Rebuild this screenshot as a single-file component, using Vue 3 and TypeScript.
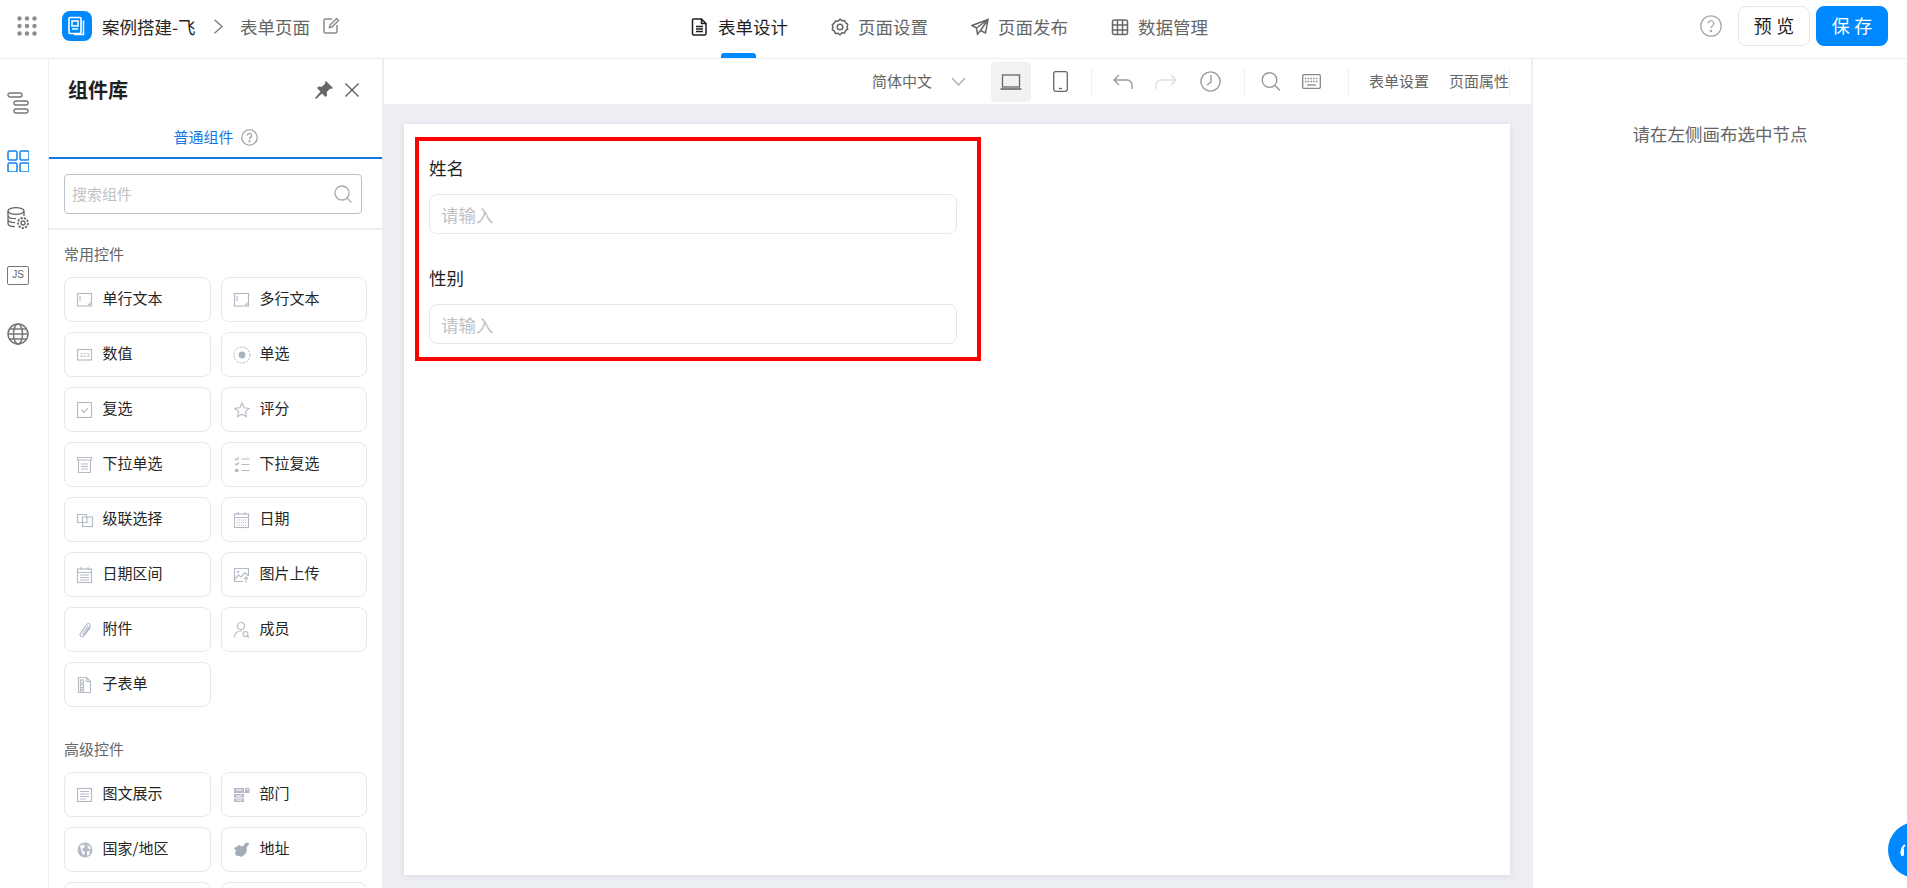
<script setup lang="ts">
interface Widget { name: string; icon: string }

const S = 'fill="none" stroke="#b4bbc7" stroke-width="1.150"'
const F = '#b4bbc7'
const icons: Record<string, string> = {
  text: `<g ${S}><rect x="0.5" y="1.500" width="14" height="12.500"/><path d="M3 4v5"/></g><path d="M13.500 10v3h-3z" fill="${F}"/>`,
  num: `<rect x="0.5" y="2.500" width="14" height="10.500" ${S}/><text x="7.500" y="9.800" text-anchor="middle" font-size="6" fill="${F}" font-family="Liberation Sans">123</text>`,
  radio: `<circle cx="8" cy="8" r="8" fill="none" stroke="#aab2c0" stroke-dasharray="2 1.200"/><circle cx="8" cy="8" r="3.400" fill="#aab2c0"/>`,
  check: `<g ${S}><rect x="0.5" y="0.500" width="14" height="15"/><path d="M4.500 8l2.400 2.400L11 6"/></g>`,
  star: `<path d="M8 1l2.100 4.700 5 .6-3.700 3.400 1 5L8 12.200l-4.400 2.500 1-5L.9 6.300l5-.6z" ${S}/>`,
  select: `<g ${S}><path d="M0.500 0.500h14v2.500h-14z"/><path d="M1.500 3v12.500h12V3M4 7h7M4 9.500h7M4 12h7"/></g>`,
  multi: `<g ${S}><path d="M1 1.500l1.500 1.500L5 .5M1 6.500l1.500 1.500L5 5.500M7.500 2h8M7.500 7.500h8M7.500 13.500h8"/></g><rect x="1" y="12" width="3.500" height="3" fill="${F}"/>`,
  cascade: `<g ${S}><path d="M6 10.500H.5v-8h9v2"/><rect x="5.500" y="5" width="10" height="9.500"/><path d="M5.500 5v5.500h4.500V5"/></g>`,
  date: `<g ${S}><rect x="0.500" y="2" width="14" height="13.500"/><path d="M0.500 5.500h14M4 0v3M11 0v3"/></g><path d="M3 8h9M3 10.500h9M3 13h9" stroke="${F}" stroke-dasharray="1 1"/>`,
  range: `<g ${S}><rect x="0.500" y="2" width="14" height="13.500"/><path d="M0.500 5.500h14M4 0v3M11 0v3M3 8h9M3 10.500h9M3 13h9"/></g>`,
  image: `<g ${S}><path d="M9 14.500H.5v-13h14V9"/><path d="M1 12l3.500-4 2.500 2 4-4.500 3 3M12 15.500V10M10.200 11.800L12 10l1.800 1.800"/></g><circle cx="4" cy="4.800" r="1.200" fill="${F}"/>`,
  clip: `<path d="M13.500 5.500L7 13.800c-1.700 2-5 .2-3.600-2.500L10 2.300c1.300-1.700 4-.3 3 1.800L7.500 12c-.8 1-2 .3-1.500-.8L11 4.500" ${S}/>`,
  member: `<g ${S}><circle cx="7" cy="4" r="3.500"/><path d="M.5 15.500c0-4 2.600-6.500 7-6.500"/><circle cx="11.500" cy="12" r="2.500"/><path d="M13.300 13.800l1.700 1.700"/></g>`,
  sub: `<g ${S}><path d="M1.500 .5h8l4 4v11h-12zM9.500 .5v4h4"/><rect x="3.500" y="3" width="3" height="3"/><rect x="3.500" y="7.500" width="3" height="3"/><rect x="3.500" y="12" width="3" height="2"/></g>`,
  rich: `<g ${S}><rect x="0.500" y="1.500" width="14" height="13"/><path d="M3 4.500h9M3 7h9M3 9.500h9M3 12h6"/></g>`,
  dept: `<path d="M0 1h10v5H0zM11 1h4.500v4H11zM0 7h10v3.500H0zM0 11.500h10V15H0z" fill="${F}"/><path d="M2 3h6M2 9h6M2 13h6M12.500 2.500h2" stroke="#fff"/><path d="M10.500 5.500h5" stroke="${F}"/>`,
  globe: `<circle cx="8" cy="8" r="7.500" fill="${F}"/><path d="M3 4l3-1.500 2 1-1 2.500-2 .5 1 2.500 2 1-1 3-2-1.500-1-4zM10 3l3 1.500 1 3-2.500-.5zM10 9.500l3-.5-1 4-2 .5z" fill="#fff"/>`,
  china: `<path d="M0 6l3-1.500 2-1.500 3 1.500 1.500-1 2-2.500 3-.5.500 2-1.500 1.500-1 2 .5 2-1 3-2.500 2.500-2.500 1.500-2-1-3-.5-1-2.500L2 9z" fill="#a3adba"/>`
}

const basic: Widget[] = [
  { name: '单行文本', icon: 'text' }, { name: '多行文本', icon: 'text' },
  { name: '数值', icon: 'num' }, { name: '单选', icon: 'radio' },
  { name: '复选', icon: 'check' }, { name: '评分', icon: 'star' },
  { name: '下拉单选', icon: 'select' }, { name: '下拉复选', icon: 'multi' },
  { name: '级联选择', icon: 'cascade' }, { name: '日期', icon: 'date' },
  { name: '日期区间', icon: 'range' }, { name: '图片上传', icon: 'image' },
  { name: '附件', icon: 'clip' }, { name: '成员', icon: 'member' },
  { name: '子表单', icon: 'sub' }
]
const advanced: Widget[] = [
  { name: '图文展示', icon: 'rich' }, { name: '部门', icon: 'dept' },
  { name: '国家/地区', icon: 'globe' }, { name: '地址', icon: 'china' },
  { name: '', icon: '' }, { name: '', icon: '' }
]
const sections = [
  { title: '常用控件', items: basic },
  { title: '高级控件', items: advanced }
]
const fields = ['姓名', '性别']
</script>

<template>
  <div class="page">
    <header class="topbar">
      <div class="crumbs">
        <svg class="apps" width="20" height="20" viewBox="0 0 20 20" fill="#8a8d92">
          <circle v-for="p in 9" :key="p" :cx="2.5 + ((p - 1) % 3) * 7.500" :cy="2.5 + Math.floor((p - 1) / 3) * 7.500" r="2.200" />
        </svg>
        <span class="logo">
          <svg width="18" height="20" viewBox="0 0 18 20" fill="none" stroke="#fff">
            <rect x="1" y="1.500" width="12" height="16" rx="1" stroke-width="1.600" />
            <rect x="4" y="5" width="6" height="5" stroke-width="1.500" />
            <path d="M4 13h6" stroke-width="1.500" />
            <path d="M15.500 4.500V18.500H6" stroke-width="1.500" />
          </svg>
        </span>
        <span class="app-name">案例搭建-飞</span>
        <svg class="crumb-arrow" width="11" height="15" viewBox="0 0 11 15" fill="none" stroke="#777" stroke-width="1.300"><path d="M1.500 .8L9 7.500l-7.500 6.700" /></svg>
        <span class="page-name">表单页面</span>
        <svg class="edit" width="17" height="17" viewBox="0 0 17 17" fill="none" stroke="#8a8a8a" stroke-width="1.500">
          <path d="M9 2H2.500a1.500 1.500 0 0 0-1.500 1.500v11A1.500 1.500 0 0 0 2.500 16h10a1.500 1.500 0 0 0 1.500-1.500V8" />
          <path d="M6.500 10.500L7 8l6.500-6.500 2 2L9 10z" />
        </svg>
      </div>

      <nav class="nav">
        <a class="nav-item active">
          <svg width="18" height="18" viewBox="0 0 18 18" fill="none" stroke="#1f1f1f" stroke-width="1.500">
            <path d="M2.500 1h8l4.500 4.500V15.500a1.500 1.500 0 0 1-1.500 1.500h-11A1.500 1.500 0 0 1 1.500 15.500V2A1 1 0 0 1 2.500 1zM10.500 1v4.500H15M5 8.500h7M5 11h7M5 13.500h7" />
          </svg>
          表单设计
        </a>
        <a class="nav-item">
          <svg width="18" height="18" viewBox="0 0 18 18" fill="none" stroke="#666" stroke-width="1.500">
            <path d="M9 1.200l2 1.500 2.500-.2 1.200 2.200 2 1.500-.6 2.700.6 2.300-2 1.400-1.200 2.300-2.500-.2L9 16.800l-2-1.600-2.500.2-1.200-2.300-2-1.400.6-2.300-.6-2.700 2-1.500 1.200-2.200 2.500.2z" />
            <circle cx="9" cy="9" r="2.800" />
          </svg>
          页面设置
        </a>
        <a class="nav-item">
          <svg width="18" height="18" viewBox="0 0 18 18" fill="none" stroke="#666" stroke-width="1.500">
            <path d="M17 1.500L1 7.500l4.500 2.500 1 6 3-3.500 5 2.500zM17 1.500L5.500 10M17 1.500L9.500 12.500" />
          </svg>
          页面发布
        </a>
        <a class="nav-item">
          <svg width="18" height="18" viewBox="0 0 18 18" fill="none" stroke="#666" stroke-width="1.500">
            <rect x="1.500" y="2" width="15" height="14.500" rx="2" />
            <path d="M6.500 2v14.500M11.500 2v14.500M1.500 7h15M1.500 12h15" />
          </svg>
          数据管理
        </a>
      </nav>

      <div class="actions">
        <svg width="22" height="22" viewBox="0 0 22 22" fill="none" stroke="#aaa" stroke-width="1.300">
          <circle cx="11" cy="11" r="10.200" />
          <path d="M8.200 8.500a2.800 2.800 0 1 1 4.400 2.300c-1 .7-1.600 1.200-1.600 2.500" />
          <circle cx="11" cy="16" r=".6" fill="#aaa" />
        </svg>
        <button class="btn">预览</button>
        <button class="btn primary">保存</button>
      </div>
    </header>

    <div class="body">
      <aside class="rail">
        <svg width="22" height="22" viewBox="0 0 22 22" fill="none" stroke="#777" stroke-width="1.400">
          <rect x="1" y="1" width="14" height="4" rx="2" />
          <rect x="7" y="9" width="14" height="4" rx="2" />
          <rect x="7" y="17" width="14" height="4" rx="2" />
        </svg>
        <svg width="22" height="22" viewBox="0 0 22 22" fill="none" stroke="#0e83ec" stroke-width="1.500">
          <rect x="1" y="1" width="9" height="9" rx="1.500" />
          <rect x="13" y="1" width="9" height="9" rx="1.500" />
          <rect x="1" y="13" width="9" height="9" rx="1.500" />
          <rect x="13" y="13" width="9" height="9" rx="1.500" />
        </svg>
        <svg width="22" height="22" viewBox="0 0 22 22" fill="none" stroke="#666" stroke-width="1.300">
          <ellipse cx="9" cy="4" rx="8" ry="3.300" />
          <path d="M1 4v12.500c0 1.800 3 3 7 3.200M17 4v5M1 8.500c0 1.800 3.500 3.200 8 3.200M1 12.500c0 1.800 3 3 7 3.200" />
          <circle cx="16" cy="16" r="2" />
          <circle cx="16" cy="16" r="5" stroke-dasharray="2.200 1.200" stroke-width="1.800" />
        </svg>
        <span class="js">JS</span>
        <svg width="22" height="22" viewBox="0 0 22 22" fill="none" stroke="#777" stroke-width="1.500">
          <circle cx="11" cy="11" r="10" />
          <ellipse cx="11" cy="11" rx="4.500" ry="10" />
          <path d="M1 11h20M2.500 6h17M2.500 16h17" />
        </svg>
      </aside>

      <section class="panel">
        <div class="panel-head">
          <h2>组件库</h2>
          <svg class="pin" width="20" height="20" viewBox="0 0 20 20" fill="#666">
            <path d="M12 1l7 7-1.500 1-1.200-.4-3.600 3.400.3 3.500-1.500 1.500-3.500-3.500L2 19l-1-1 5.500-6.500L3 8l1.500-1.500 3.500.3 3.400-3.600L11 2z" />
          </svg>
          <svg class="close" width="14" height="14" viewBox="0 0 14 14" stroke="#555" stroke-width="1.200"><path d="M.5 .5l13 13M13.500 .5l-13 13" /></svg>
        </div>
        <div class="tab">
          普通组件
          <svg width="17" height="17" viewBox="0 0 22 22" fill="none" stroke="#999" stroke-width="1.500">
            <circle cx="11" cy="11" r="10" />
            <path d="M8.200 8.500a2.800 2.800 0 1 1 4.400 2.300c-1 .7-1.600 1.200-1.600 2.500" />
            <circle cx="11" cy="16" r=".6" fill="#999" />
          </svg>
        </div>
        <div class="search-wrap">
          <div class="search">
            <span>搜索组件</span>
            <svg width="18" height="18" viewBox="0 0 18 18" fill="none" stroke="#a5a9b0" stroke-width="1.300">
              <circle cx="8" cy="8" r="7" />
              <path d="M13 13l4.500 4.500" />
            </svg>
          </div>
        </div>
        <div v-for="sec in sections" :key="sec.title" class="group">
          <h3>{{ sec.title }}</h3>
          <div class="cards">
            <div v-for="(w, i) in sec.items" :key="i" class="card">
              <template v-if="w.name">
                <svg class="card-icon" width="16" height="16" viewBox="0 0 16 16" v-html="icons[w.icon]" />
                <span>{{ w.name }}</span>
              </template>
            </div>
          </div>
        </div>
      </section>

      <main class="main">
        <div class="toolbar">
          <span class="tool-text">简体中文</span>
          <svg class="t-chev" width="15" height="9" viewBox="0 0 15 9" fill="none" stroke="#aaa" stroke-width="1.200"><path d="M1 1l6.500 7L14 1" /></svg>
          <span class="device">
            <svg width="22" height="16" viewBox="0 0 22 16" fill="none" stroke="#666" stroke-width="1.300">
              <rect x="2.500" y="1" width="17" height="12" />
              <path d="M.5 15h21" stroke-width="1.600" />
            </svg>
          </span>
          <svg class="t-phone" width="15" height="21" viewBox="0 0 15 21" fill="none" stroke="#666" stroke-width="1.300">
            <rect x=".7" y=".7" width="13.600" height="19.600" rx="2" />
            <path d="M6 17.500h3" />
          </svg>
          <i class="sep s1"></i>
          <svg class="t-undo" width="20" height="16" viewBox="0 0 20 16" fill="none" stroke="#999" stroke-width="1.300">
            <path d="M6 1L1 6l5 5M1 6h13a5 5 0 0 1 5 5v4" />
          </svg>
          <svg class="t-redo" width="22" height="16" viewBox="0 0 22 16" fill="none" stroke="#ddd" stroke-width="1.300">
            <path d="M16 1l5 5-5 5M21 6H6a5 5 0 0 0-5 5v4" />
          </svg>
          <svg class="t-clock" width="21" height="21" viewBox="0 0 21 21" fill="none" stroke="#999" stroke-width="1.400">
            <circle cx="10.500" cy="10.500" r="9.600" />
            <path d="M11 4v7l-4 3" />
          </svg>
          <i class="sep s2"></i>
          <svg class="t-search" width="21" height="19" viewBox="0 0 21 19" fill="none" stroke="#999" stroke-width="1.400">
            <circle cx="8.500" cy="8" r="7.300" />
            <path d="M14 13.500l5 5" />
          </svg>
          <svg class="t-keys" width="19" height="15" viewBox="0 0 19 15" fill="none" stroke="#888" stroke-width="1.300">
            <rect x=".7" y=".7" width="17.600" height="13.600" rx="1" />
            <path d="M3 4.500h13M3 7.500h13" stroke-dasharray="1.500 1.200" />
            <path d="M5 11h9" />
          </svg>
          <i class="sep s3"></i>
          <span class="tool-text t-form">表单设置</span>
          <span class="tool-text t-page">页面属性</span>
          <i class="sep s4"></i>
        </div>

        <div class="canvas">
          <div class="sheet">
            <div class="form">
              <div v-for="f in fields" :key="f" class="field">
                <label>{{ f }}</label>
                <div class="input">请输入</div>
              </div>
            </div>
          </div>
        </div>
      </main>

      <aside class="props">请在左侧画布选中节点</aside>
    </div>

    <div class="fab">
      <svg width="28" height="28" viewBox="0 0 28 28" fill="none" stroke="#fff" stroke-width="2">
        <path d="M13 9c-3 2-4 6-3 11" />
        <path d="M12 12l-4 5 4 3" fill="#fff" stroke="none" />
      </svg>
    </div>
  </div>
</template>

<style>
html, body { margin: 0; padding: 0; overflow: hidden; background: #fff; }
</style>

<style scoped>
.page {
  position: relative;
  display: flex;
  flex-direction: column;
  height: 100vh;
  overflow: hidden;
  font-family: "Noto Sans CJK SC", "Noto Sans", sans-serif;
  color: #1f1f1f;
}
.topbar {
  position: relative;
  flex: 0 0 59px;
  box-sizing: border-box;
  display: grid;
  grid-template-columns: 691px auto 1fr;
  align-items: start;
  border-bottom: 1px solid #ecedef;
  font-size: 17.5px;
}
.crumbs { display: flex; align-items: center; padding-left: 17px; height: 52px; }
.logo {
  width: 30px; height: 30px; margin-left: 25px; border-radius: 8px; background: #0089ff;
  display: flex; align-items: center; justify-content: center;
}
.app-name { margin-left: 10px; white-space: nowrap; width: 100px; color: #262626; }
.crumb-arrow { margin-left: 11px; }
.page-name { margin-left: 16px; color: #666; white-space: nowrap; }
.edit { margin-left: 13px; margin-top: -1px; }
.nav { display: flex; gap: 43px; height: 58px; }
.nav-item {
  position: relative; display: flex; align-items: center; gap: 9px; height: 58px; box-sizing: border-box; padding-bottom: 6px;
  white-space: nowrap; color: #666;
}
.nav-item svg { margin-top: 2px; }
.nav-item.active { color: #1f1f1f; }
.nav-item.active::after {
  content: ""; position: absolute; left: 30px; bottom: 0; width: 35px; height: 5px;
  background: #0089ff; border-radius: 3px 3px 0 0;
}
.actions { display: flex; align-items: center; justify-content: flex-end; padding-right: 19px; height: 52px; }
.btn {
  box-sizing: border-box; width: 72px; height: 40px; margin-left: 6px; border: 1px solid #e5e6e8; border-radius: 8px;
  background: #fff; color: #1f1f1f; font: inherit; font-size: 18px; letter-spacing: 4.500px; padding: 0 0 3px 4.500px;
}
.actions svg + .btn { margin-left: 16px; }
.btn.primary { background: #0089ff; border-color: #0089ff; color: #fff; }

.body { flex: 1; display: flex; min-height: 0; }
.rail {
  flex: 0 0 49px; box-sizing: border-box; border-right: 1px solid #ecedef;
  display: flex; flex-direction: column; gap: 35.700px; padding: 33px 0 0 7px;
}
.js {
  box-sizing: border-box; width: 22px; height: 19px; margin-top: 1px; margin-bottom: 2px; border: 1.500px solid #777; border-radius: 2px;
  font: 10px/16px "Liberation Sans", sans-serif; color: #666; text-align: center;
}
.panel { flex: 0 0 333px; overflow: hidden; }
.panel-head { display: flex; align-items: center; height: 62px; padding-left: 19px; padding-top: 0; }
.panel-head h2 { margin: 0; font-size: 20px; font-weight: 700; line-height: 62px; color: #1f1f1f; flex: 1; }
.pin { margin-right: 11px; }
.close { margin-right: 23px; }
.tab {
  box-sizing: border-box; height: 38px; border-bottom: 2px solid #1178e6; color: #1178e6; font-size: 15px;
  display: flex; align-items: flex-start; justify-content: center; gap: 7px; line-height: 32px;
  padding-top: 0;
}
.tab svg { margin-top: 8px; }
.search-wrap { box-sizing: border-box; height: 71px; padding: 15px 20px 0 15px; border-bottom: 2px solid #eceef0; }
.search {
  box-sizing: border-box; height: 40px; border: 1px solid #bcc2cc; border-radius: 4px;
  display: flex; align-items: center; justify-content: space-between; padding: 0 9px 0 7px;
  font-size: 15px; color: #bfc1c5;
}
.search span { padding-bottom: 2px; }
.group { padding: 13px 15px 0; }
.group + .group { padding-top: 31px; }
.group h3 { margin: 0 0 12px; font-size: 15px; font-weight: 400; line-height: 22px; color: #666; }
.cards { display: grid; grid-template-columns: 147px 146px; gap: 10px; }
.card {
  box-sizing: border-box; height: 45px; border: 1.500px solid #e7e8ea; border-radius: 8px;
  display: flex; align-items: center; gap: 10px; padding-left: 11.500px; font-size: 15px; color: #262626; white-space: nowrap;
}
.card span { padding-bottom: 5px; }
.card-icon { flex: none; overflow: visible; }

.main { flex: 0 0 1149px; min-width: 0; box-sizing: border-box; border-left: 2px solid #eceef2; display: flex; flex-direction: column; }
.toolbar { flex: 0 0 45px; display: flex; align-items: center; font-size: 15px; color: #666; padding-left: 488px; box-sizing: border-box; }
.tool-text { white-space: nowrap; padding-bottom: 2px; }
.t-chev { margin-left: 19px; }
.device {
  width: 40px; height: 40px; margin-left: 25px; margin-top: 1px; background: #f1f2f3; border-radius: 4px;
  display: flex; align-items: center; justify-content: center; flex: none;
}
.t-phone { margin-left: 22px; }
.sep { flex: none; width: 1px; height: 25px; background: #eceef0; }
.s1 { margin-left: 23px; }
.t-undo { margin-left: 21px; }
.t-redo { margin-left: 22px; }
.t-clock { margin-left: 23px; }
.s2 { margin-left: 23px; }
.t-search { margin-left: 16px; }
.t-keys { margin-left: 20px; }
.s3 { margin-left: 27px; }
.t-form { margin-left: 20px; }
.t-page { margin-left: 20px; }
.canvas { flex: 1; min-height: 0; background: #eceef2; padding: 20px 21px 13px 20px; box-sizing: border-box; }
.sheet { height: 100%; background: #fff; box-shadow: 0 1px 6px rgba(90, 100, 130, 0.14); overflow: hidden; padding: 13px 0 0 11px; box-sizing: border-box; }
.form { box-sizing: border-box; width: 566px; height: 224px; border: 4px solid #f00; padding: 16px 20px 0 10px; }
.field + .field { margin-top: 33px; }
.field label { display: block; height: 22px; margin-bottom: 15px; font-size: 17.5px; line-height: 22px; color: #1f1f1f; }
.input {
  box-sizing: border-box; height: 40px; border: 1.500px solid #e7e8ea; border-radius: 8px;
  padding-left: 11px; font-size: 17.5px; line-height: 39px; color: #bfc1c5;
}
.props {
  flex: 1; box-sizing: border-box; padding-top: 64px; text-align: center; border-left: 2px solid #eceef2;
  font-size: 17.5px; line-height: 22px; color: #666;
}
.fab {
  position: absolute; left: 1888px; top: 822px; width: 56px; height: 56px; border-radius: 50%; background: #0089ff;
  display: flex; align-items: center; padding-left: 4px; box-sizing: border-box;
}
</style>
